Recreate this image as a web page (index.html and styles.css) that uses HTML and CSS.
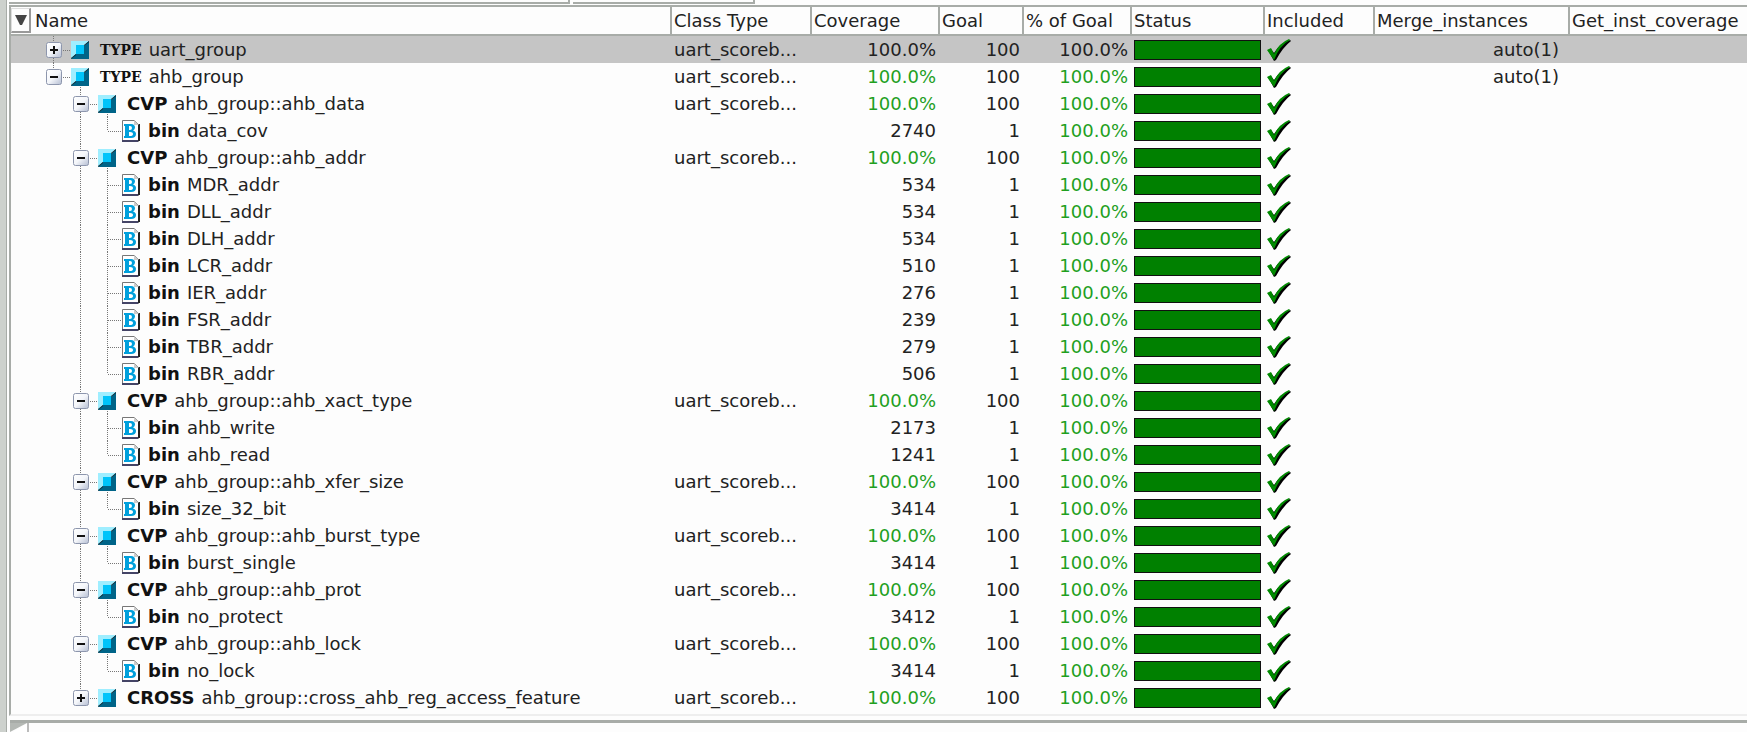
FILE: index.html
```html
<!DOCTYPE html>
<html lang="en">
<head>
<meta charset="utf-8">
<title>Covergroups</title>
<link rel="stylesheet" href="styles.css">
</head>
<body>
<svg class="defs" aria-hidden="true">
  <defs>
    <linearGradient id="face" x1="0" y1="0" x2="1" y2="1">
      <stop offset="0" stop-color="#fff"/><stop offset=".5" stop-color="#f4f6fa"/><stop offset="1" stop-color="#b4bdd2"/>
    </linearGradient>
    <symbol id="group" viewBox="0 0 18 18">
      <path fill="#9feeff" d="M0 0h18L0 18z"/>
      <path fill="#006488" d="M18 0v18H0z"/>
      <path fill="#0a2028" d="M18 0l-5 4v1l5-4zM0 18l5-4v-1l-5 4z"/>
      <path fill="#00c4fa" d="M5 4h8v9H5z"/>
    </symbol>
    <symbol id="bin" viewBox="0 0 18 22">
      <path fill="#fff" stroke="#777" d="M.5.5h12l4 4v17H.5z"/>
      <path fill="none" stroke="#222" stroke-width="2" d="M17 4v17"/>
      <path fill="none" stroke="#446" stroke-width="2" d="M0 21h16"/>
      <path fill="#ccc" d="M12 0v5h5z"/>
      <path fill="#00a0dc" fill-rule="evenodd" d="M2 4h7q4 0 4 3.500 0 2-2 3 3 1 3 3.500 0 4-5 4H2v-2h1V6H2zM7 6v4h1q2 0 2-2t-2-2zM7 12v4h1q3 0 3-2t-3-2z"/>
    </symbol>
    <symbol id="check" viewBox="0 0 24 22">
      <path fill="#000" d="M1 11l3-1 3 4Q13 4 23 1l1 1Q16 8 9 21l-2 1z"/>
      <path fill="#008a00" d="M0 11l4-2 3 6Q12 4 22 0l1 1Q13 6 7 21z"/>
    </symbol>
  </defs>
</svg>
<div class="pane">
  <div class="tabs"><span class="tab"></span><span class="tab tab-wide"></span></div>
  <div class="list">
    <table class="grid">
      <colgroup>
        <col class="c-name"><col class="c-class"><col class="c-cov"><col class="c-goal"><col class="c-pct"><col class="c-status"><col class="c-inc"><col class="c-merge"><col>
      </colgroup>
      <thead>
        <tr><th class="first"><div class="name-head"><button class="sort" aria-label="Column menu"><svg width="12" height="10" viewBox="0 0 12 10"><path fill="#444" d="M0 0h12L7 10H5z"/></svg></button><span class="name-label">Name</span></div></th><th>Class Type</th><th>Coverage</th><th>Goal</th><th>% of Goal</th><th>Status</th><th>Included</th><th>Merge_instances</th><th>Get_inst_coverage</th></tr>
      </thead>
      <tbody id="rows"></tbody>
    </table>
  </div>
  <div class="scroll"><button class="scroll-left" aria-label="Scroll left"><svg width="17" height="12" viewBox="0 0 17 12"><path fill="#b4b8b4" d="M0 0h17L0 9z"/><path fill="#fff" d="M17 1v11H3V9z"/></svg></button></div>
</div>
<script src="rows.js"></script>
</body>
</html>
```
FILE: styles.css
```css
* { box-sizing: border-box; }

body {
  margin: 0;
  background: #cdd1cd;
  color: #222;
  font: 18px/26px "DejaVu Sans", sans-serif;
}

.defs { position: absolute; width: 0; height: 0; }

.pane {
  min-height: 100vh;
  overflow: hidden;
  margin-left: 6px;
  border-left: 1px solid #a8aca8;
  background: #fdfdfd;
  display: flex;
  flex-direction: column;
}

.tabs { display: flex; gap: 3px; height: 5px; padding-bottom: 1px; margin-left: 2px; }
.tab { width: 561px; border: solid #a8aca8; border-width: 0 2px 2px 0; }
.tab-wide { width: 182px; }

.list {
  margin-left: 2px;
  border-left: 2px solid #a8aca8;
  border-top: 2px solid #a8aca8;
  border-bottom: 2px solid #eee;
  padding-bottom: 3px;
  overflow: hidden;
}

.grid { width: 100%; border-collapse: collapse; table-layout: fixed; }
.c-name { width: 660px; }
.c-class { width: 140px; }
.c-cov { width: 128px; }
.c-goal { width: 84px; }
.c-pct { width: 108px; }
.c-status { width: 133px; }
.c-inc { width: 110px; }
.c-merge { width: 195px; }

th {
  height: 28px;
  padding: 0 2px;
  font-weight: 400;
  text-align: left;
  white-space: nowrap;
  border-right: 2px solid #a8aca8;
  border-bottom: 2px solid #a8aca8;
}
th:last-child { border-right: 0; }
th.first { padding: 0; }
.name-head { display: flex; align-items: center; gap: 4px; }
.sort {
  width: 20px;
  height: 25px;
  padding: 0;
  border: 1px solid #ddd;
  border-right: 2px solid #999;
  border-bottom: 2px solid #999;
  background: #fdfdfd;
  display: flex;
  align-items: center;
  justify-content: center;
}

td { height: 27px; padding: 0 3px; white-space: nowrap; overflow: hidden; }
td.name { padding: 0; }
td.num { text-align: right; }
td.merge { text-align: right; padding-right: 10px; }
td.ok { color: #1fa01f; }
.selected td { background: #c5c5c5; }
.selected td.ok { color: #222; }

.node { display: flex; height: 27px; align-items: center; }
.tree { flex: none; }
.node b { margin: 0 7px 0 10px; color: #111; }
.node.leaf b { margin-left: 7px; }
.node b.type { font: bold 14px/26px "DejaVu Serif", serif; }

.bar { height: 20px; background: #008000; border: 1px solid #111; margin-top: 1px; }
.check { display: block; margin-top: 1px; }

.scroll { margin-top: 4px; margin-left: 3px; border-top: 3px solid #a8aca8; flex: 1; }
.scroll-left { display: block; padding: 0; border: 0; border-right: 2px solid #bbb; background: none; height: 12px; }
```
FILE: rows.js
```js
// [kind, label, coverage, goal]
const data = [
  ["TYPE", "uart_group", "100.0%", 100],
  ["TYPE", "ahb_group", "100.0%", 100],
  ["CVP", "ahb_group::ahb_data", "100.0%", 100],
  ["bin", "data_cov", 2740, 1],
  ["CVP", "ahb_group::ahb_addr", "100.0%", 100],
  ["bin", "MDR_addr", 534, 1],
  ["bin", "DLL_addr", 534, 1],
  ["bin", "DLH_addr", 534, 1],
  ["bin", "LCR_addr", 510, 1],
  ["bin", "IER_addr", 276, 1],
  ["bin", "FSR_addr", 239, 1],
  ["bin", "TBR_addr", 279, 1],
  ["bin", "RBR_addr", 506, 1],
  ["CVP", "ahb_group::ahb_xact_type", "100.0%", 100],
  ["bin", "ahb_write", 2173, 1],
  ["bin", "ahb_read", 1241, 1],
  ["CVP", "ahb_group::ahb_xfer_size", "100.0%", 100],
  ["bin", "size_32_bit", 3414, 1],
  ["CVP", "ahb_group::ahb_burst_type", "100.0%", 100],
  ["bin", "burst_single", 3414, 1],
  ["CVP", "ahb_group::ahb_prot", "100.0%", 100],
  ["bin", "no_protect", 3412, 1],
  ["CVP", "ahb_group::ahb_lock", "100.0%", 100],
  ["bin", "no_lock", 3414, 1],
  ["CROSS", "ahb_group::cross_ahb_reg_access_feature", "100.0%", 100]
];

const line = (d) => `<path d="${d}" stroke="#777" stroke-dasharray="1 1" fill="none"/>`;

function toggle(x, open) {
  return `<rect x="${x - 7.5}" y="6.5" width="15" height="15" rx="2" fill="url(#face)" stroke="#8d96ad"/>` +
    `<path d="M${x - 4} 14h8${open ? "" : `M${x} 10v8`}" stroke="#111" stroke-width="2"/>`;
}

function tree(kind, i) {
  const next = data[i + 1];
  let out = "";
  if (kind === "TYPE") {
    out += line(i === 0 ? "M42.5 0V27" : "M42.5 0V14") + line("M50 14.500H60");
    if (i === 1) out += line("M69.5 22V27");
    return [79, out + toggle(43, i === 1) + '<use href="#group" x="60" y="5" width="18" height="18"/>'];
  }
  if (kind === "bin") {
    out += line("M69.5 0V27") + line(next && next[0] === "bin" ? "M96.5 0V27" : "M96.5 0V14") + line("M97 14.500H110");
    return [130, out + '<use href="#bin" x="111" y="3" width="18" height="22"/>'];
  }
  const open = kind === "CVP";
  out += line(open ? "M69.5 0V27" : "M69.5 0V14") + line("M77 14.500H87");
  if (open) out += line("M96.5 22V27");
  return [106, out + toggle(70, open) + '<use href="#group" x="87" y="5" width="18" height="18"/>'];
}

document.getElementById("rows").innerHTML = data.map(([kind, label, cov, goal], i) => {
  const [w, art] = tree(kind, i);
  const bin = kind === "bin";
  return `<tr class="${i === 0 ? "selected" : ""}">
    <td class="name"><div class="node ${bin ? "leaf" : ""}"><svg class="tree" width="${w}" height="27">${art}</svg><b class="${kind.toLowerCase()}">${kind}</b><span>${label}</span></div></td>
    <td>${bin ? "" : "uart_scoreb..."}</td>
    <td class="num ${bin ? "" : "ok"}">${cov}</td>
    <td class="num">${goal}</td>
    <td class="num ok">100.0%</td>
    <td><div class="bar"></div></td>
    <td><svg class="check" width="24" height="22"><use href="#check" width="24" height="22"/></svg></td>
    <td class="merge">${kind === "TYPE" ? "auto(1)" : ""}</td>
    <td></td></tr>`;
}).join("");
```
